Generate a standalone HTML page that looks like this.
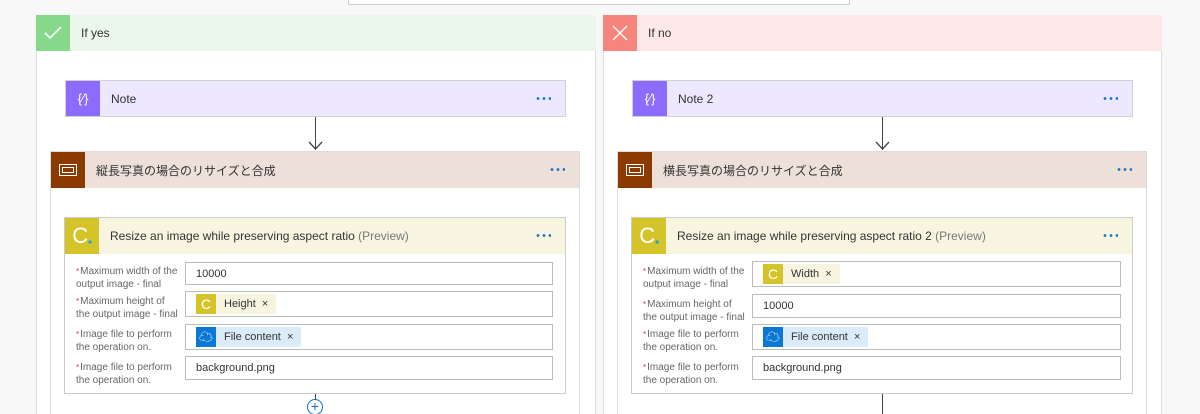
<!DOCTYPE html>
<html style="width:1200px;height:414px;overflow:hidden"><head><meta charset="utf-8"><style>
*{box-sizing:border-box;margin:0;padding:0}
body{width:1200px;height:414px;background:#f8f8f8;position:relative;overflow:hidden;font-family:"Segoe UI","Liberation Sans","Noto Sans CJK JP",sans-serif;color:#333;font-size:12px}
.a{position:absolute}
.panel{background:#fff;border:1px solid #ddd}
.hdr{display:flex;align-items:center}
.ic{width:34px;height:100%;display:flex;align-items:center;justify-content:center;color:#fff;flex:none}
.t{padding-left:11px;font-size:12px}
.dots{position:absolute;right:14px;top:50%;margin-top:-2px;width:16px;height:3px;background:radial-gradient(circle,#1a73d0 1.2px,transparent 1.6px) 0 0/6px 3px repeat-x}
.lbl{position:absolute;font-size:10px;line-height:13px;color:#666}
.lbl b{color:#d33;font-weight:normal;font-size:8px;vertical-align:top;margin-right:1px}
.inp{position:absolute;background:#fff;border:1px solid #bbb;font-size:11px;display:flex;align-items:center;padding-left:10px}
.tok{display:flex;align-items:center;height:20px;font-size:11px;padding-right:8px}
.tok .ti{width:20px;height:20px;display:flex;align-items:center;justify-content:center;color:#fff;margin-right:8px;font-size:14px}
</style></head><body>
<div class="a" style="left:348px;top:-1px;width:502px;height:6px;background:#fff;border:1px solid #ccc"></div>

<!-- LEFT -->
<div class="a panel" style="left:36px;top:15px;width:560px;height:399px;border-bottom:none"></div>
<div class="a hdr" style="left:36px;top:15px;width:560px;height:36px;background:#ecf7ec">
<div class="ic" style="background:#86d98a"><svg width="18" height="14"><path d="M1 7l5 5L17 1" stroke="#fff" stroke-width="1.6" fill="none"/></svg></div><div class="t">If yes</div></div>

<div class="a hdr panel" style="left:65px;top:80px;width:501px;height:37px;background:#ede8fe;border-color:#d0d0d8">
<div class="ic" style="background:#8c6cff;font-size:13px">{&#x2215;}</div><div class="t">Note</div><div class="dots"></div></div>
<div class="a" style="left:315px;top:117px;width:1px;height:33px;background:#444"></div>
<svg class="a" style="left:308px;top:140px" width="15" height="11"><path d="M1 2l6.5 7L14 2" stroke="#444" stroke-width="1.3" fill="none"/></svg>

<div class="a panel" style="left:50px;top:151px;width:530px;height:263px;border-bottom:none"></div>
<div class="a hdr" style="left:51px;top:152px;width:528px;height:36px;background:#ede0d8">
<div class="ic" style="background:#8b3a00"><svg width="18" height="12"><rect x="0.5" y="0.5" width="17" height="11" fill="none" stroke="#fff"/><rect x="3.5" y="3.5" width="11" height="5" fill="none" stroke="#fff"/></svg></div><div class="t">縦長写真の場合のリサイズと合成</div><div class="dots"></div></div>

<div class="a panel" style="left:64px;top:217px;width:502px;height:177px;border-color:#ccc"></div>
<div class="a hdr" style="left:65px;top:218px;width:500px;height:36px;background:#f7f5e0">
<div class="ic" style="background:#d4c42a;font-size:22px">C<span style="color:#1a9ee0;font-size:6px;margin-top:14px">■</span></div><div class="t">Resize an image while preserving aspect ratio <span style="color:#777">(Preview)</span></div><div class="dots"></div></div>

<div class="lbl" style="left:76px;top:265px"><b>*</b>Maximum width of the<br>output image - final</div>
<div class="inp" style="left:185px;top:262px;width:368px;height:23px">10000</div>
<div class="lbl" style="left:76px;top:295px"><b>*</b>Maximum height of<br>the output image - final</div>
<div class="inp" style="left:185px;top:291px;width:368px;height:26px"><div class="tok" style="background:#f7f5e0"><div class="ti" style="background:#d4c42a">C</div>Height&nbsp;&nbsp;×</div></div>
<div class="lbl" style="left:76px;top:328px"><b>*</b>Image file to perform<br>the operation on.</div>
<div class="inp" style="left:185px;top:324px;width:368px;height:26px"><div class="tok" style="background:#dcebf9"><div class="ti" style="background:#0a78d4">☁</div>File content&nbsp;&nbsp;×</div></div>
<div class="lbl" style="left:76px;top:361px"><b>*</b>Image file to perform<br>the operation on.</div>
<div class="inp" style="left:185px;top:356px;width:368px;height:24px">background.png</div>
<div class="a" style="left:315px;top:394px;width:1px;height:6px;background:#444"></div>
<div class="a" style="left:307px;top:399px;width:16px;height:16px;border:1px solid #0a6fd6;border-radius:50%;background:#fff;color:#0a6fd6;font-size:14px;line-height:13px;text-align:center">+</div>

<!-- RIGHT -->
<div class="a panel" style="left:603px;top:15px;width:559px;height:399px;border-bottom:none"></div>
<div class="a hdr" style="left:603px;top:15px;width:559px;height:36px;background:#fde8e8">
<div class="ic" style="background:#f6857e"><svg width="16" height="16"><path d="M1 1l14 14M15 1L1 15" stroke="#fff" stroke-width="1.4"/></svg></div><div class="t">If no</div></div>

<div class="a hdr panel" style="left:632px;top:80px;width:501px;height:37px;background:#ede8fe;border-color:#d0d0d8">
<div class="ic" style="background:#8c6cff;font-size:13px">{&#x2215;}</div><div class="t">Note 2</div><div class="dots"></div></div>
<div class="a" style="left:882px;top:117px;width:1px;height:33px;background:#444"></div>
<svg class="a" style="left:875px;top:140px" width="15" height="11"><path d="M1 2l6.5 7L14 2" stroke="#444" stroke-width="1.3" fill="none"/></svg>

<div class="a panel" style="left:617px;top:151px;width:530px;height:263px;border-bottom:none"></div>
<div class="a hdr" style="left:618px;top:152px;width:528px;height:36px;background:#ede0d8">
<div class="ic" style="background:#8b3a00"><svg width="18" height="12"><rect x="0.5" y="0.5" width="17" height="11" fill="none" stroke="#fff"/><rect x="3.5" y="3.5" width="11" height="5" fill="none" stroke="#fff"/></svg></div><div class="t">横長写真の場合のリサイズと合成</div><div class="dots"></div></div>

<div class="a panel" style="left:631px;top:217px;width:502px;height:177px;border-color:#ccc"></div>
<div class="a hdr" style="left:632px;top:218px;width:500px;height:36px;background:#f7f5e0">
<div class="ic" style="background:#d4c42a;font-size:22px">C<span style="color:#1a9ee0;font-size:6px;margin-top:14px">■</span></div><div class="t">Resize an image while preserving aspect ratio 2 <span style="color:#777">(Preview)</span></div><div class="dots"></div></div>

<div class="lbl" style="left:643px;top:265px"><b>*</b>Maximum width of the<br>output image - final</div>
<div class="inp" style="left:752px;top:261px;width:369px;height:26px"><div class="tok" style="background:#f7f5e0"><div class="ti" style="background:#d4c42a">C</div>Width&nbsp;&nbsp;×</div></div>
<div class="lbl" style="left:643px;top:298px"><b>*</b>Maximum height of<br>the output image - final</div>
<div class="inp" style="left:752px;top:294px;width:369px;height:24px">10000</div>
<div class="lbl" style="left:643px;top:328px"><b>*</b>Image file to perform<br>the operation on.</div>
<div class="inp" style="left:752px;top:324px;width:369px;height:26px"><div class="tok" style="background:#dcebf9"><div class="ti" style="background:#0a78d4">☁</div>File content&nbsp;&nbsp;×</div></div>
<div class="lbl" style="left:643px;top:361px"><b>*</b>Image file to perform<br>the operation on.</div>
<div class="inp" style="left:752px;top:356px;width:369px;height:24px">background.png</div>
<div class="a" style="left:882px;top:394px;width:1px;height:20px;background:#444"></div>
</body></html>
